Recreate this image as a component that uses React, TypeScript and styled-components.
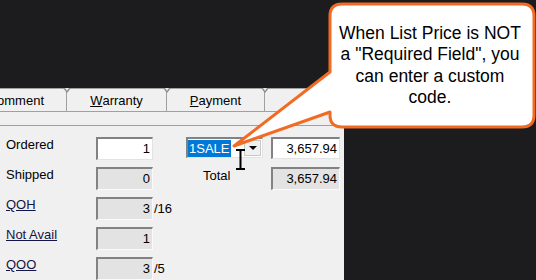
import React from "react";
import styled, { createGlobalStyle } from "styled-components";

const GlobalStyle = createGlobalStyle`
  html, body {
    margin: 0;
    padding: 0;
    background: #1c1c1e;
  }
  * {
    box-sizing: border-box;
  }
`;

const Stage = styled.div`
  position: relative;
  width: 536px;
  height: 280px;
  overflow: hidden;
  background: #1c1c1e;
  padding-top: 88px;
  font-family: "Liberation Sans", Arial, sans-serif;
  font-size: 13px;
  color: #000;
`;

const Window = styled.div`
  width: 344px;
  height: 192px;
  background: #f0f0f0;
  display: flex;
  flex-direction: column;
`;

const TabStrip = styled.div`
  display: flex;
  height: 25px;
  border-top: 1px solid #a0a0a0;
  border-bottom: 1px solid #a0a0a0;
`;

const Tab = styled.div<{ $width: number; $align?: string; $padRight?: number }>`
  position: relative;
  width: ${(p) => p.$width}px;
  flex: none;
  display: flex;
  align-items: center;
  justify-content: ${(p) => p.$align || "center"};
  padding-right: ${(p) => p.$padRight || 0}px;
  border-right: 1px solid #a0a0a0;
  white-space: nowrap;
  overflow: visible;

  &::before {
    content: "";
    position: absolute;
    right: -5px;
    top: -1px;
    border-left: 4px solid transparent;
    border-right: 4px solid transparent;
    border-top: 5px solid #8c8c8c;
  }
  &::after {
    content: "";
    position: absolute;
    right: -3px;
    top: -1px;
    border-left: 2px solid transparent;
    border-right: 2px solid transparent;
    border-top: 3px solid #e8e8e8;
  }
`;

const TabGap = styled.div`
  height: 14px;
  border-bottom: 1px solid #a0a0a0;
`;

const Content = styled.div`
  display: flex;
  padding-top: 11px;
`;

const LeftCol = styled.div`
  width: 186px;
  padding-left: 6px;
  display: flex;
  flex-direction: column;
  gap: 7px;
`;

const Row = styled.div`
  display: flex;
  height: 23px;
`;

const Label = styled.div<{ $link?: boolean }>`
  width: 90px;
  line-height: 16px;
  color: ${(p) => (p.$link ? "#141446" : "#000")};
  text-decoration: ${(p) => (p.$link ? "underline" : "none")};
`;

const Field = styled.div<{ $width: number; $height: number; $readOnly?: boolean }>`
  width: ${(p) => p.$width}px;
  height: ${(p) => p.$height}px;
  flex: none;
  background: ${(p) => (p.$readOnly ? "#e3e3e3" : "#fff")};
  border-top: 2px solid #828282;
  border-left: 2px solid #828282;
  border-right: 1px solid ${(p) => (p.$readOnly ? "#fafafa" : "#e3e3e3")};
  border-bottom: 1px solid ${(p) => (p.$readOnly ? "#fafafa" : "#e3e3e3")};
  display: flex;
  align-items: center;
  justify-content: flex-end;
  padding-right: 2px;
  line-height: 16px;
`;

const Suffix = styled.div`
  margin-left: 1px;
  line-height: 16px;
  align-self: center;
`;

const RightCol = styled.div`
  display: grid;
  grid-template-columns: 77px 69px;
  grid-template-rows: 22px 23px;
  column-gap: 8px;
  row-gap: 8px;
`;

const Combo = styled.div`
  width: 77px;
  height: 21px;
  display: flex;
  background: #fff;
  border-top: 2px solid #828282;
  border-left: 2px solid #828282;
  border-right: 1px solid #e3e3e3;
  border-bottom: 1px solid #e3e3e3;
`;

const ComboText = styled.div`
  flex: 1;
  display: flex;
  align-items: center;
`;

const Selection = styled.span`
  background: #0078d7;
  color: #fff;
  line-height: 17px;
  padding: 0 2px 0 1px;
`;

const ComboButton = styled.div`
  width: 17px;
  margin: 1px 1px 1px 0;
  background: #f0f0f0;
  border: 1px solid #c8c8c8;
  display: flex;
  align-items: center;
  justify-content: center;

  &::after {
    content: "";
    border-left: 4px solid transparent;
    border-right: 4px solid transparent;
    border-top: 4px solid #000;
  }
`;

const TotalLabel = styled.div`
  padding-left: 17px;
  padding-top: 1px;
  line-height: 16px;
`;

const Overlay = styled.svg`
  position: absolute;
  left: 0;
  top: 0;
  pointer-events: none;
`;

const CalloutText = styled.div`
  position: absolute;
  left: 330px;
  top: 4px;
  width: 200px;
  height: 123px;
  display: flex;
  flex-direction: column;
  align-items: center;
  justify-content: center;
  text-align: center;
  font-size: 17.5px;
  line-height: 21.5px;
  color: #000;
  white-space: nowrap;
`;

const Cursor = styled.svg`
  position: absolute;
  left: 235px;
  top: 148px;
`;

const rows = [
  { label: "Ordered", value: "1", readOnly: false },
  { label: "Shipped", value: "0", readOnly: true },
  { label: "QOH", value: "3", readOnly: true, link: true, suffix: "/16" },
  { label: "Not Avail", value: "1", readOnly: true, link: true },
  { label: "QOO", value: "3", readOnly: true, link: true, suffix: "/5" },
];

const App = () => {
  return (
    <>
      <GlobalStyle />
      <Stage>
        <Window>
          <TabStrip>
            <Tab $width={67} $align="flex-end" $padRight={22}>
              Comment
            </Tab>
            <Tab $width={100}>
              <u>W</u>arranty
            </Tab>
            <Tab $width={98}>
              <u>P</u>ayment
            </Tab>
          </TabStrip>
          <TabGap />
          <Content>
            <LeftCol>
              {rows.map((r) => (
                <Row key={r.label}>
                  <Label $link={r.link}>{r.label}</Label>
                  <Field $width={57} $height={23} $readOnly={r.readOnly}>
                    {r.value}
                  </Field>
                  {r.suffix && <Suffix>{r.suffix}</Suffix>}
                </Row>
              ))}
            </LeftCol>
            <RightCol>
              <Combo>
                <ComboText>
                  <Selection>1SALE</Selection>
                </ComboText>
                <ComboButton />
              </Combo>
              <Field $width={69} $height={22}>
                3,657.94
              </Field>
              <TotalLabel>Total</TotalLabel>
              <Field $width={69} $height={23} $readOnly>
                3,657.94
              </Field>
            </RightCol>
          </Content>
        </Window>

        <Cursor width="12" height="24" viewBox="0 0 12 24">
          <path
            d="M1 2 H10 M5.5 2 V21 M1 21 H10"
            stroke="#000"
            strokeWidth="2"
            fill="none"
          />
        </Cursor>

        <Overlay width="536" height="280" viewBox="0 0 536 280">
          <path
            d="M342 4 H522 Q534 4 534 16 V115 Q534 127 522 127 H342 Q330 127 330 115 V112 L234 146 L330 72 V16 Q330 4 342 4 Z"
            fill="#fff"
            stroke="#f26b23"
            strokeWidth="3"
            strokeLinejoin="round"
          />
        </Overlay>
        <CalloutText>
          <div>When List Price is NOT</div>
          <div>a "Required Field", you</div>
          <div>can enter a custom</div>
          <div>code.</div>
        </CalloutText>
      </Stage>
    </>
  );
};

export default App;
